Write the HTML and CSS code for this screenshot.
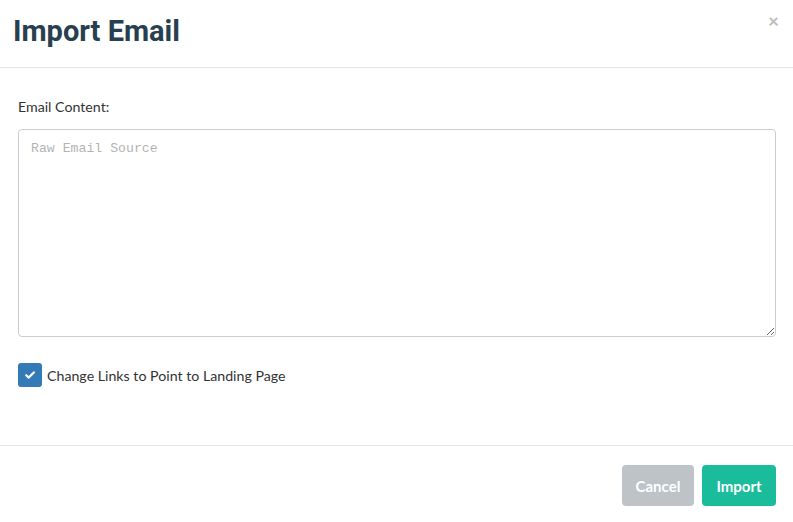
FILE: index.html
```html
<!DOCTYPE html>
<html lang="en">
<head>
  <meta charset="UTF-8">
  <title>Import Email</title>
  <link rel="stylesheet" href="styles.css">
</head>
<body>
  <div class="modal">
    <div class="modal-header">
      <h2 class="modal-title">Import Email</h2>
      <span class="close">&times;</span>
    </div>
    <div class="modal-body">
      <label class="field-label" for="email_content">Email Content:</label>
      <textarea id="email_content" class="form-control" placeholder="Raw Email Source"></textarea>
      <label class="checkbox">
        <span class="check-box">
          <svg width="12" height="12" viewBox="0 0 12 12"><path d="M2.2 6.2 L4.8 8.6 L9.8 3.4" fill="none" stroke="#fff" stroke-width="2.2" stroke-linecap="round" stroke-linejoin="round"/></svg>
        </span>
        <span class="check-text">Change Links to Point to Landing Page</span>
      </label>
    </div>
    <div class="modal-footer">
      <button class="btn btn-cancel">Cancel</button>
      <button class="btn btn-primary">Import</button>
    </div>
  </div>
</body>
</html>
```

FILE: styles.css
```css
body {
  margin: 0;
  font-family: 'Lato', 'Open Sans', sans-serif;
  background: #fff;
  color: #333;
}
.modal {
  width: 793px;
  height: 522px;
}
.modal-header {
  display: flex;
  justify-content: space-between;
  align-items: flex-start;
  height: 68px;
  border-bottom: 1px solid #e5e5e5;
  box-sizing: border-box;
  padding: 0 13px 0 13px;
}
.modal-title {
  margin: 14px 0 0 0;
  font-family: 'Roboto', sans-serif;
  font-size: 29px;
  font-weight: 700;
  color: #283f50;
}
.close {
  margin-top: 9px;
  margin-right: 1px;
  font-size: 19px;
  color: #bbb;
  font-weight: 700;
}
.modal-body {
  padding: 30px 17px 0 18px;
  height: 378px;
  box-sizing: border-box;
  border-bottom: 1px solid #e5e5e5;
}
.field-label {
  display: block;
  font-size: 14.2px;
  margin-bottom: 14px;
}
.form-control {
  display: block;
  width: 100%;
  height: 208px;
  box-sizing: border-box;
  border: 1px solid #ccc;
  border-radius: 4px;
  padding: 11px 12px;
  font-family: 'Liberation Mono', monospace;
  font-size: 13.2px;
  resize: vertical;
}
.form-control::placeholder {
  color: #b4b4b4;
}
.checkbox {
  display: flex;
  align-items: center;
  margin-top: 26px;
  font-size: 14.2px;
}
.check-box {
  width: 24px;
  height: 24px;
  border-radius: 3px;
  background: #337ab7;
  display: flex;
  align-items: center;
  justify-content: center;
  margin-right: 5px;
}
.modal-footer {
  display: flex;
  justify-content: flex-end;
  gap: 8px;
  padding: 19px 17px 0 0;
}
.btn {
  height: 41px;
  border: none;
  border-radius: 4px;
  color: #fff;
  font-family: 'Lato', sans-serif;
  font-size: 15px;
  font-weight: 700;
  padding: 0;
}
.btn-cancel {
  background: #bdc3c7;
  width: 72px;
}
.btn-primary {
  background: #1abc9c;
  width: 74px;
}
```
